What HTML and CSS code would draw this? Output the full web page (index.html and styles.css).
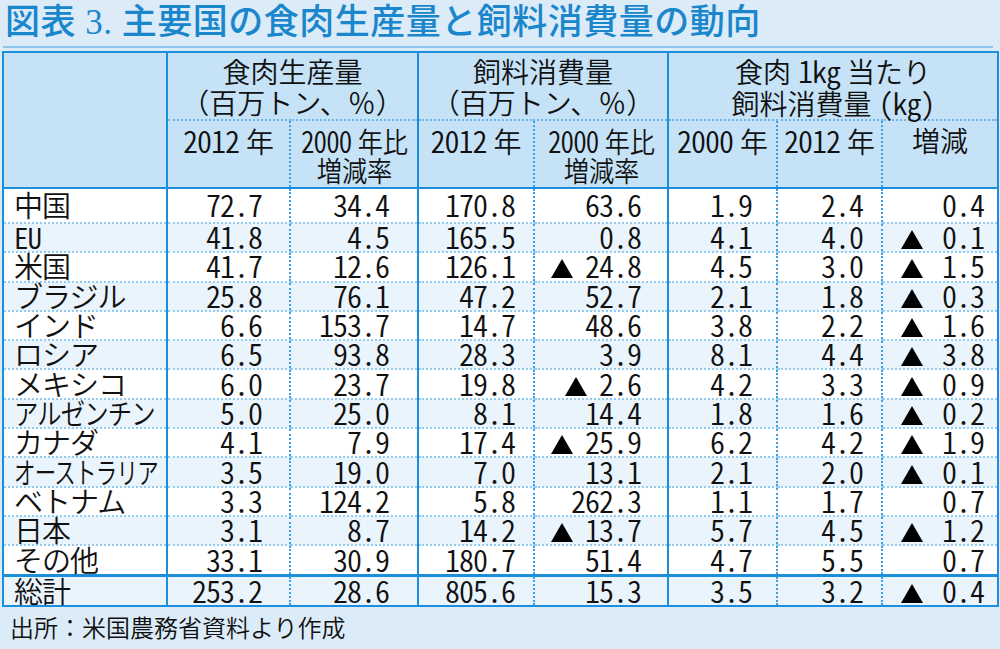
FILE: index.html
```html
<!DOCTYPE html>
<html lang="ja">
<head>
<meta charset="utf-8">
<title>図表 3. 主要国の食肉生産量と飼料消費量の動向</title>
<link rel="stylesheet" href="styles.css">
</head>
<body>
<h1 class="title">図表 3. 主要国の食肉生産量と飼料消費量の動向</h1>
<table class="tbl">
  <colgroup>
    <col class="w1"><col class="w2"><col class="w3"><col class="w4"><col class="w5"><col class="w6"><col class="w7"><col class="w8">
  </colgroup>
  <thead>
    <tr class="hr1">
      <th rowspan="2" class="corner"></th>
      <th colspan="2" class="grp">食肉生産量<br>（百万トン、％）</th>
      <th colspan="2" class="grp">飼料消費量<br>（百万トン、％）</th>
      <th colspan="3" class="grp">食肉&#x2005;<span class="hw">1kg</span>&#x2005;当たり<br>飼料消費量&#x2005;<span class="hw">(kg)</span></th>
    </tr>
    <tr class="hr2">
      <th class="g"><span class="hw">2012</span>&#x2005;年</th>
      <th class="d"><span class="sq"><span class="hw">2000</span>&#x2005;年比<br>増減率</span></th>
      <th class="g"><span class="hw">2012</span>&#x2005;年</th>
      <th class="d"><span class="sq"><span class="hw">2000</span>&#x2005;年比<br>増減率</span></th>
      <th class="g"><span class="hw">2000</span>&#x2005;年</th>
      <th class="d"><span class="hw">2012</span>&#x2005;年</th>
      <th class="d">増減</th>
    </tr>
  </thead>
  <tbody>
    <tr class="first"><td class="nm">中国</td><td>72.7</td><td>34.4</td><td>170.8</td><td>63.6</td><td>1.9</td><td>2.4</td><td>0.4</td></tr>
    <tr class="alt"><td class="nm">EU</td><td>41.8</td><td>4.5</td><td>165.5</td><td>0.8</td><td>4.1</td><td>4.0</td><td><span class="tri"></span>0.1</td></tr>
    <tr><td class="nm">米国</td><td>41.7</td><td>12.6</td><td>126.1</td><td><span class="tri"></span>24.8</td><td>4.5</td><td>3.0</td><td><span class="tri"></span>1.5</td></tr>
    <tr class="alt"><td class="nm">ブラジル</td><td>25.8</td><td>76.1</td><td>47.2</td><td>52.7</td><td>2.1</td><td>1.8</td><td><span class="tri"></span>0.3</td></tr>
    <tr><td class="nm">インド</td><td>6.6</td><td>153.7</td><td>14.7</td><td>48.6</td><td>3.8</td><td>2.2</td><td><span class="tri"></span>1.6</td></tr>
    <tr class="alt"><td class="nm">ロシア</td><td>6.5</td><td>93.8</td><td>28.3</td><td>3.9</td><td>8.1</td><td>4.4</td><td><span class="tri"></span>3.8</td></tr>
    <tr><td class="nm">メキシコ</td><td>6.0</td><td>23.7</td><td>19.8</td><td><span class="tri"></span>2.6</td><td>4.2</td><td>3.3</td><td><span class="tri"></span>0.9</td></tr>
    <tr class="alt"><td class="nm"><span class="cx s84">アルゼンチン</span></td><td>5.0</td><td>25.0</td><td>8.1</td><td>14.4</td><td>1.8</td><td>1.6</td><td><span class="tri"></span>0.2</td></tr>
    <tr><td class="nm">カナダ</td><td>4.1</td><td>7.9</td><td>17.4</td><td><span class="tri"></span>25.9</td><td>6.2</td><td>4.2</td><td><span class="tri"></span>1.9</td></tr>
    <tr class="alt"><td class="nm"><span class="cx s74">オーストラリア</span></td><td>3.5</td><td>19.0</td><td>7.0</td><td>13.1</td><td>2.1</td><td>2.0</td><td><span class="tri"></span>0.1</td></tr>
    <tr><td class="nm">ベトナム</td><td>3.3</td><td>124.2</td><td>5.8</td><td>262.3</td><td>1.1</td><td>1.7</td><td>0.7</td></tr>
    <tr class="alt"><td class="nm">日本</td><td>3.1</td><td>8.7</td><td>14.2</td><td><span class="tri"></span>13.7</td><td>5.7</td><td>4.5</td><td><span class="tri"></span>1.2</td></tr>
    <tr class="other"><td class="nm">その他</td><td>33.1</td><td>30.9</td><td>180.7</td><td>51.4</td><td>4.7</td><td>5.5</td><td>0.7</td></tr>
    <tr class="alt total"><td class="nm">総計</td><td>253.2</td><td>28.6</td><td>805.6</td><td>15.3</td><td>3.5</td><td>3.2</td><td><span class="tri"></span>0.4</td></tr>
  </tbody>
</table>
<p class="src">出所：米国農務省資料より作成</p>
</body>
</html>
```
FILE: styles.css
```css
* { box-sizing: border-box; }
html, body { margin: 0; padding: 0; }
body {
  width: 1000px;
  height: 649px;
  overflow: hidden;
  background: #dcebf8;
  color: #111;
  font-family: "Noto Sans CJK JP", "Noto Sans", sans-serif;
  font-weight: 350;
}
.hw { font-feature-settings: "hwid" 1; font-size: 30px; letter-spacing: -1px; }
.title {
  margin: 0 7px 0 3px;
  height: 48px;
  padding: 0 0 0 2px;
  font-family: "Liberation Serif", "Noto Sans CJK JP", serif;
  font-size: 35px;
  font-weight: 500;
  letter-spacing: 0.5px;
  line-height: 46px;
  color: #1a86cc;
  white-space: nowrap;
  border-bottom: 2px solid #8cc5ee;
}
.tbl {
  margin: 3px 0 0 2px;
  width: 995px;
  border-collapse: collapse;
  table-layout: fixed;
  border: 2px solid #1b8fdc;
}
.w1 { width: 164px; }
.w2 { width: 123px; }
.w3 { width: 128px; }
.w4 { width: 116px; }
.w5 { width: 134px; }
.w6 { width: 109px; }
.w7 { width: 105px; }
.w8 { width: 116px; }

th, td {
  padding: 0;
  font-size: 28px;
  font-weight: 350;
  line-height: 25px;
  white-space: nowrap;
  overflow: visible;
}
thead th {
  background: #c6e2f7;
  text-align: center;
}
.corner { border-right: 2px solid #1b8fdc; border-bottom: 2px solid #1b8fdc; }
.hr1 { height: 66px; }
.hr1 .grp {
  line-height: 31px;
  vertical-align: middle;
  padding-top: 2px;
  border-left: 2px solid #1b8fdc;
  border-bottom: 2px dotted #6db6ea;
}
.hr2 { height: 68px; }
.hr2 th {
  vertical-align: top;
  line-height: 29px;
  padding-top: 5px;
  border-bottom: 2px solid #1b8fdc;
}
.g { border-left: 2px solid #1b8fdc; }
.d { border-left: 2px dotted #3d9fe3; }
.sq { display: inline-block; transform: scaleX(0.9); transform-origin: center; }

tbody tr { height: 29.3px; background: #ffffff; }
tbody tr.alt { background: #eaf4fc; }
tbody tr.first { height: 35px; }
tbody tr.other { height: 30px; }
tbody tr.total { height: 31px; }
tbody td {
  text-align: right;
  vertical-align: middle;
  padding-top: 0;
  padding-bottom: 2px;
  border-bottom: 2px dotted #94cbf1;
  font-feature-settings: "hwid" 1;
  font-size: 30px;
  letter-spacing: -1px;
}
tbody tr.other td { border-bottom: 3px solid #1b8fdc; }
tbody tr.total td { border-bottom: 0; }
tbody td.nm { text-align: left; padding-left: 10px; font-size: 29px; letter-spacing: -1px; }

tbody td:nth-child(2) { padding-right: 27px; border-left: 2px solid #1b8fdc; }
tbody td:nth-child(3) { padding-right: 28px; border-left: 2px dotted #3d9fe3; }
tbody td:nth-child(4) { padding-right: 18px; border-left: 2px solid #1b8fdc; }
tbody td:nth-child(5) { padding-right: 26px; border-left: 2px dotted #3d9fe3; }
tbody td:nth-child(6) { padding-right: 24px; border-left: 2px solid #1b8fdc; }
tbody td:nth-child(7) { padding-right: 18px; border-left: 2px dotted #3d9fe3; }
tbody td:nth-child(8) { padding-right: 13px; border-left: 2px dotted #3d9fe3; }

.cx { display: inline-block; transform-origin: left center; }
.s84 { transform: scaleX(0.84); }
.s74 { transform: scaleX(0.74); }

.tri {
  display: inline-block;
  width: 0;
  height: 0;
  border-left: 11.5px solid transparent;
  border-right: 11.5px solid transparent;
  border-bottom: 19px solid #000;
  margin-right: 12px;
  vertical-align: baseline;
}
tbody td:nth-child(8) .tri { margin-right: 19px; }

.src {
  margin: 0;
  height: 41px;
  padding-left: 10px;
  font-size: 24px;
  font-weight: 350;
  line-height: 40px;
  white-space: nowrap;
}
```
